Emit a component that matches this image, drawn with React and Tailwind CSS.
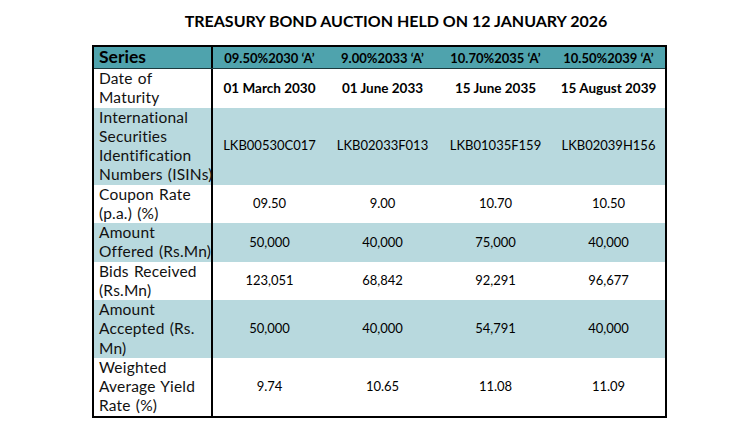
import React from "react";

const rows = [
  {
    label: ["Date of", "Maturity"],
    values: ["01 March 2030", "01 June 2033", "15 June 2035", "15 August 2039"],
    bold: true,
    shade: false,
  },
  {
    label: ["International", "Securities", "Identification", "Numbers (ISINs)"],
    values: ["LKB00530C017", "LKB02033F013", "LKB01035F159", "LKB02039H156"],
    shade: true,
  },
  {
    label: ["Coupon Rate", "(p.a.) (%)"],
    values: ["09.50", "9.00", "10.70", "10.50"],
    shade: false,
  },
  {
    label: ["Amount", "Offered (Rs.Mn)"],
    values: ["50,000", "40,000", "75,000", "40,000"],
    shade: true,
  },
  {
    label: ["Bids Received", "(Rs.Mn)"],
    values: ["123,051", "68,842", "92,291", "96,677"],
    shade: false,
  },
  {
    label: ["Amount", "Accepted (Rs.", "Mn)"],
    values: ["50,000", "40,000", "54,791", "40,000"],
    shade: true,
  },
  {
    label: ["Weighted", "Average Yield", "Rate (%)"],
    values: ["9.74", "10.65", "11.08", "11.09"],
    shade: false,
  },
];

const series = ["09.50%2030 \u2018A\u2019", "9.00%2033 \u2018A\u2019", "10.70%2035 \u2018A\u2019", "10.50%2039 \u2018A\u2019"];

const App = () => {
  return (
    <div
      className="w-[756px] h-[426px] bg-white text-black overflow-hidden"
      style={{ fontFamily: "Lato, 'Open Sans', sans-serif" }}
    >
      <h1 className="pt-[9px] h-[45px] text-center text-[16px] font-bold pl-[36px]">
        TREASURY BOND AUCTION HELD ON 12 JANUARY 2026
      </h1>
      <div className="ml-[92px] w-[575px] border-2 border-black">
        <div className="grid grid-cols-[119px_repeat(4,1fr)] h-[22px] bg-[#4fa3ad] border-b border-[#1d3a3e]">
          <div className="border-r-2 border-black pl-[5px] text-[17.5px] font-bold leading-[20px]">
            Series
          </div>
          {series.map((s, i) => (
            <div
              key={s}
              className={`flex justify-center text-[13px] font-bold leading-[20px] ${
                i === 0 ? "items-start pt-[1px]" : "items-end"
              }`}
            >
              {s}
            </div>
          ))}
        </div>
        {rows.map((r) => (
          <div
            key={r.label.join(" ")}
            className={`grid grid-cols-[119px_repeat(4,1fr)] ${
              r.shade ? "bg-[#b8d9de]" : "bg-white"
            }`}
          >
            <div className="border-r-2 border-black pl-[5px] text-[15.5px] leading-[19.25px] text-[#111] tracking-[0.2px] [word-spacing:1px]">
              {r.label.map((l) => (
                <div key={l} className="whitespace-nowrap">
                  {l}
                </div>
              ))}
            </div>
            {r.values.map((v) => (
              <div
                key={v}
                className={`flex items-center justify-center ${
                  r.bold ? "font-bold text-[13.5px]" : "text-[13px]"
                }`}
              >
                {v}
              </div>
            ))}
          </div>
        ))}
      </div>
    </div>
  );
};

export default App;
